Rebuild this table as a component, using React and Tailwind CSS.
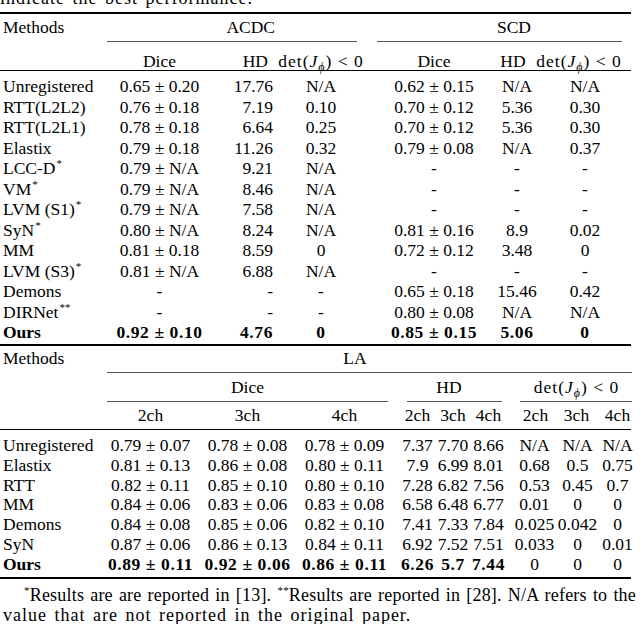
import React from "react";

const T1 =
  "grid grid-cols-[107px_105px_61px_96px_8px_114px_52px_84px] items-center whitespace-nowrap";
const T2 =
  "grid grid-cols-[102px_97px_97px_97px_7px_35px_36px_35px_9px_41px_41px_41px] items-center whitespace-nowrap";

const Phi = () => (
  <span className="text-[12px] leading-[0] align-[-4px] italic">ϕ</span>
);
const Det = () => (
  <span className="tracking-[1px]">
    det(<span className="italic">J</span>
    <Phi />) &lt; 0
  </span>
);
const Star = ({ n = 1 }) => (
  <span className="text-[11px] leading-[0] align-[7px] ml-[1px]">
    {n === 2 ? "**" : "*"}
  </span>
);

const t1Rows = [
  ["Unregistered", "0.65 ± 0.20", "17.76", "N/A", "0.62 ± 0.15", "N/A", "N/A"],
  ["RTT(L2L2)", "0.76 ± 0.18", "7.19", "0.10", "0.70 ± 0.12", "5.36", "0.30"],
  ["RTT(L2L1)", "0.78 ± 0.18", "6.64", "0.25", "0.70 ± 0.12", "5.36", "0.30"],
  ["Elastix", "0.79 ± 0.18", "11.26", "0.32", "0.79 ± 0.08", "N/A", "0.37"],
  [["LCC-D", 1], "0.79 ± N/A", "9.21", "N/A", "-", "-", "-"],
  [["VM", 1], "0.79 ± N/A", "8.46", "N/A", "-", "-", "-"],
  [["LVM (S1)", 1], "0.79 ± N/A", "7.58", "N/A", "-", "-", "-"],
  [["SyN", 1], "0.80 ± N/A", "8.24", "N/A", "0.81 ± 0.16", "8.9", "0.02"],
  ["MM", "0.81 ± 0.18", "8.59", "0", "0.72 ± 0.12", "3.48", "0"],
  [["LVM (S3)", 1], "0.81 ± N/A", "6.88", "N/A", "-", "-", "-"],
  ["Demons", "-", "-", "-", "0.65 ± 0.18", "15.46", "0.42"],
  [["DIRNet", 2], "-", "-", "-", "0.80 ± 0.08", "N/A", "N/A"],
];

const t2Rows = [
  ["Unregistered", "0.79 ± 0.07", "0.78 ± 0.08", "0.78 ± 0.09", "7.37", "7.70", "8.66", "N/A", "N/A", "N/A"],
  ["Elastix", "0.81 ± 0.13", "0.86 ± 0.08", "0.80 ± 0.11", "7.9", "6.99", "8.01", "0.68", "0.5", "0.75"],
  ["RTT", "0.82 ± 0.11", "0.85 ± 0.10", "0.80 ± 0.10", "7.28", "6.82", "7.56", "0.53", "0.45", "0.7"],
  ["MM", "0.84 ± 0.06", "0.83 ± 0.06", "0.83 ± 0.08", "6.58", "6.48", "6.77", "0.01", "0", "0"],
  ["Demons", "0.84 ± 0.08", "0.85 ± 0.06", "0.82 ± 0.10", "7.41", "7.33", "7.84", "0.025", "0.042", "0"],
  ["SyN", "0.87 ± 0.06", "0.86 ± 0.13", "0.84 ± 0.11", "6.92", "7.52", "7.51", "0.033", "0", "0.01"],
];

const Name = ({ v }) =>
  Array.isArray(v) ? (
    <span>
      {v[0]}
      <Star n={v[1]} />
    </span>
  ) : (
    <span>{v}</span>
  );

function Row1({ r, bold }) {
  const b = bold ? "font-bold tracking-[0.6px]" : "";
  return (
    <div className={`${T1} h-[20.5px] leading-[20px]`}>
      <div className={`pl-[3px] ${bold ? "font-bold" : ""}`}>
        <Name v={r[0]} />
      </div>
      <div className={`flex justify-center ${b}`}>{r[1]}</div>
      <div className={`flex justify-end ${b}`}>{r[2]}</div>
      <div className={`flex justify-center ${b}`}>{r[3]}</div>
      <div />
      <div className={`flex justify-center ${b}`}>{r[4]}</div>
      <div className={`flex justify-center ${b}`}>{r[5]}</div>
      <div className={`flex justify-center ${b}`}>{r[6]}</div>
    </div>
  );
}

function Row2({ r, bold }) {
  const b = bold ? "font-bold tracking-[0.6px]" : "";
  return (
    <div className={`${T2} h-[19.8px] leading-[20px]`}>
      <div className={`pl-[3px] ${bold ? "font-bold" : ""}`}>{r[0]}</div>
      <div className={`flex justify-center ${b}`}>{r[1]}</div>
      <div className={`flex justify-center ${b}`}>{r[2]}</div>
      <div className={`flex justify-center ${b}`}>{r[3]}</div>
      <div />
      <div className={`flex justify-center ${b}`}>{r[4]}</div>
      <div className={`flex justify-center ${b}`}>{r[5]}</div>
      <div className={`flex justify-center ${b}`}>{r[6]}</div>
      <div />
      <div className="flex justify-center pr-[2px]">{r[7]}</div>
      <div className="flex justify-center pl-[2px]">{r[8]}</div>
      <div className="flex justify-center">{r[9]}</div>
    </div>
  );
}

export default function App() {
  return (
    <div className="w-[640px] h-[624px] overflow-hidden bg-white text-black font-['Liberation_Serif','Times_New_Roman',serif] text-[17.5px]">
      {/* caption tail */}
      <div className="h-[12px] overflow-hidden">
        <div className="mt-[-12px] text-[18px] leading-[20px] tracking-[1px] [word-spacing:2px] whitespace-nowrap">
          indicate the best performance.
        </div>
      </div>
      <div className="h-[1.5px] w-[631px] bg-black" />

      {/* Table 1 header */}
      <div className={`${T1} h-[27.5px] leading-[20px]`}>
        <div className="pl-[3px]">Methods</div>
        <div />
        <div className="flex justify-end">
          <span className="mr-[-2px]">ACDC</span>
        </div>
        <div />
        <div />
        <div />
        <div className="flex justify-center pr-[6px]">SCD</div>
        <div />
      </div>
      <div className="flex h-px">
        <div className="ml-[107px] w-[250px] bg-[#555]" />
        <div className="ml-[20px] w-[245px] bg-[#555]" />
      </div>
      <div className="h-[28px] pt-[9px]">
        <div className={`${T1} h-[20px] leading-[20px]`}>
          <div />
          <div className="flex justify-center">Dice</div>
          <div className="flex justify-end pr-[5px]">HD</div>
          <div className="flex justify-center">
            <Det />
          </div>
          <div />
          <div className="flex justify-center">Dice</div>
          <div className="flex justify-center pr-[8px]">HD</div>
          <div className="flex justify-center pr-[12px]">
            <Det />
          </div>
        </div>
      </div>
      <div className="h-px w-[631px] bg-black" />

      <div className="pt-[4.75px]">
        {t1Rows.map((r, i) => (
          <Row1 key={i} r={r} />
        ))}
        <Row1
          bold
          r={["Ours", "0.92 ± 0.10", "4.76", "0", "0.85 ± 0.15", "5.06", "0"]}
        />
      </div>

      <div className="mt-[2px] h-[2px] w-[631px] bg-black" />

      {/* Table 2 header */}
      <div className={`${T2} h-[23px] leading-[20px]`}>
        <div className="pl-[3px]">Methods</div>
        <div />
        <div />
        <div className="flex justify-center pl-[21px]">LA</div>
      </div>
      <div className="mt-[2.5px] flex h-px">
        <div className="ml-[107px] w-[525px] bg-[#555]" />
      </div>
      <div className={`${T2} h-[28px] leading-[20px]`}>
        <div />
        <div className="col-span-3 flex justify-center">Dice</div>
        <div />
        <div className="col-span-3 flex justify-center pr-[8px]">HD</div>
        <div />
        <div className="col-span-3 flex justify-center">
          <Det />
        </div>
      </div>
      <div className="flex h-px">
        <div className="ml-[107px] w-[281px] bg-[#555]" />
        <div className="ml-[19px] w-[95px] bg-[#555]" />
        <div className="ml-[18px] w-[112px] bg-[#555]" />
      </div>
      <div className={`${T2} h-[27px] leading-[20px]`}>
        <div />
        <div className="flex justify-center">2ch</div>
        <div className="flex justify-center">3ch</div>
        <div className="flex justify-center">4ch</div>
        <div />
        <div className="flex justify-center">2ch</div>
        <div className="flex justify-center">3ch</div>
        <div className="flex justify-center">4ch</div>
        <div />
        <div className="flex justify-center">2ch</div>
        <div className="flex justify-center">3ch</div>
        <div className="flex justify-center">4ch</div>
      </div>
      <div className="h-px w-[631px] bg-black" />

      <div className="pt-[5.35px]">
        {t2Rows.map((r, i) => (
          <Row2 key={i} r={r} />
        ))}
        <Row2
          bold
          r={["Ours", "0.89 ± 0.11", "0.92 ± 0.06", "0.86 ± 0.11", "6.26", "5.7", "7.44", "0", "0", "0"]}
        />
      </div>

      <div className="mt-[3.5px] h-[1.5px] w-[631px] bg-black" />

      {/* footnote */}
      <div className="mt-[6px] text-[18px] leading-[20px]">
        <div className="w-[636px] pl-[24px] tracking-[0.2px] text-justify [text-align-last:justify]">
          <span className="text-[11px] leading-[0] align-[7px]">*</span>Results are
          are reported in [13].{" "}
          <span className="text-[11px] leading-[0] align-[7px]">**</span>Results are
          reported in [28]. N/A refers to the
        </div>
        <div className="pl-[3px] tracking-[1px] [word-spacing:2px] whitespace-nowrap">
          value that are not reported in the original paper.
        </div>
      </div>
    </div>
  );
}
